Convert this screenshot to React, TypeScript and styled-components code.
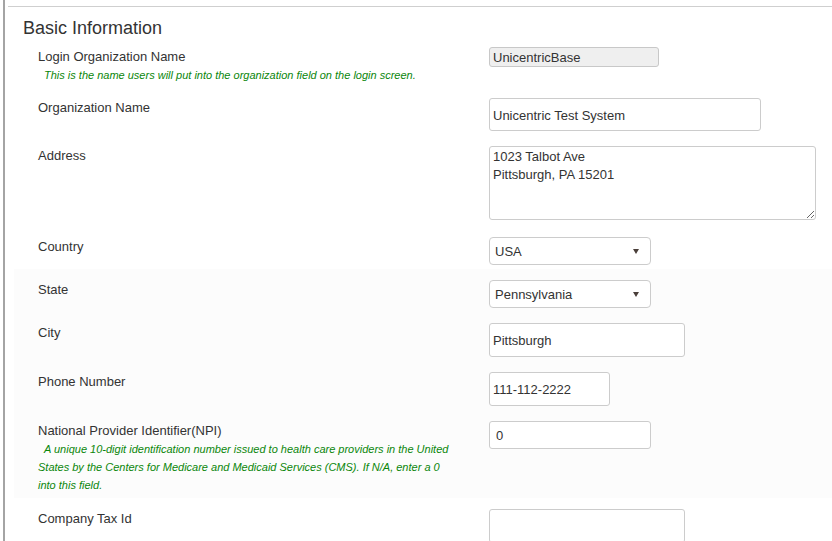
import React from 'react'
import styled, { createGlobalStyle } from 'styled-components'

const GlobalStyle = createGlobalStyle`
	body {
		margin: 0;
		background: #fff;
		color: #333;
		font-family: 'Liberation Sans', Arial, sans-serif;
	}
`

const Frame = styled.div`
	margin-left: 3px;
	padding: 6px 0 0 3px;
	border-left: 2px solid #a4a4a4;
	min-height: 541px;
	box-sizing: border-box;
	overflow: hidden;
`

const Panel = styled.section`
	border-top: 1px solid #cfcfcf;
`

const Heading = styled.h3`
	margin: 0 0 8px;
	padding: 10px 0 0 15px;
	font-size: 18px;
	font-weight: normal;
	line-height: 22px;
	color: #333;
`

const Row = styled.div<{ $after?: number }>`
	display: flex;
	align-items: flex-start;
	padding-left: 30px;
	margin-bottom: ${p => p.$after ?? 15}px;
`

const Group = styled.div`
	margin: 0 0 11px 6px;
	padding: 11px 0 4px;
	background: #fcfcfc;

	& > ${Row} {
		padding-left: 24px;
	}
`

const LabelCol = styled.div`
	flex: none;
	width: 451px;
	padding-top: 2px;
`

const Label = styled.div`
	font-size: 13px;
	line-height: 16px;
	color: #333;
`

const Help = styled.div`
	max-width: 420px;
	padding-top: 1px;
	font-size: 11px;
	font-style: italic;
	line-height: 18px;
	color: #0a860a;
	text-indent: 6px;
`

const fieldFont = `
	font-family: 'Liberation Sans', Arial, sans-serif;
	font-size: 13px;
	color: #333;
`

const TextInput = styled.input<{ $w: number; $h: number; $pad?: number }>`
	box-sizing: border-box;
	width: ${p => p.$w}px;
	height: ${p => p.$h}px;
	margin: 0;
	padding: 1px ${p => p.$pad ?? 3}px 0;
	border: 1px solid #ccc;
	border-radius: 3px;
	background: #fff;
	outline: none;
	${fieldFont}

	&:disabled {
		background: #efefef;
		color: #333;
		border-color: #c8c8c8;
	}
`

const TextArea = styled.textarea`
	box-sizing: border-box;
	width: 327px;
	height: 74px;
	margin: 0;
	padding: 1px 3px 0;
	border: 1px solid #ccc;
	border-radius: 3px;
	line-height: 18px;
	resize: vertical;
	outline: none;
	${fieldFont}
`

const SelectWrap = styled.div<{ $w: number }>`
	position: relative;
	width: ${p => p.$w}px;

	&::after {
		content: '';
		position: absolute;
		right: 12px;
		top: calc(50% - 2px);
		border-left: 3px solid transparent;
		border-right: 3px solid transparent;
		border-top: 5px solid #4a3f3a;
		pointer-events: none;
	}
`

const Select = styled.select`
	appearance: none;
	box-sizing: border-box;
	width: 100%;
	height: 28px;
	margin: 0;
	padding: 0 20px 0 5px;
	border: 1px solid #ccc;
	border-radius: 4px;
	background: #fff;
	outline: none;
	${fieldFont}
`

type Field = {
	label: string
	help?: string
	control: React.ReactNode
	after?: number
}

const FieldRow = ({ label, help, control, after }: Field) => (
	<Row $after={after}>
		<LabelCol>
			<Label>{label}</Label>
			{help && <Help>{help}</Help>}
		</LabelCol>
		{control}
	</Row>
)

export default function App() {
	return (
		<>
			<GlobalStyle />
			<Frame>
				<Panel>
					<Heading>Basic Information</Heading>
					<FieldRow
						label="Login Organization Name"
						help="This is the name users will put into the organization field on the login screen."
						control={<TextInput $w={170} $h={20} disabled defaultValue="UnicentricBase" />}
						after={14}
					/>
					<FieldRow
						label="Organization Name"
						control={<TextInput $w={272} $h={33} defaultValue="Unicentric Test System" />}
					/>
					<FieldRow
						label="Address"
						control={<TextArea defaultValue={'1023 Talbot Ave\nPittsburgh, PA 15201'} />}
						after={17}
					/>
					<FieldRow
						label="Country"
						after={4}
						control={
							<SelectWrap $w={162}>
								<Select defaultValue="USA">
									<option>USA</option>
									<option>Canada</option>
								</Select>
							</SelectWrap>
						}
					/>
					<Group>
						<FieldRow
							label="State"
							control={
								<SelectWrap $w={162}>
									<Select defaultValue="Pennsylvania">
										<option>Ohio</option>
										<option>Pennsylvania</option>
									</Select>
								</SelectWrap>
							}
						/>
						<FieldRow
							label="City"
							control={<TextInput $w={196} $h={34} defaultValue="Pittsburgh" />}
						/>
						<FieldRow
							label="Phone Number"
							control={<TextInput $w={121} $h={34} defaultValue="111-112-2222" />}
						/>
						<FieldRow
							label="National Provider Identifier(NPI)"
							help="A unique 10-digit identification number issued to health care providers in the United States by the Centers for Medicare and Medicaid Services (CMS). If N/A, enter a 0 into this field."
							control={<TextInput $w={162} $h={28} $pad={6} defaultValue="0" />}
							after={0}
						/>
					</Group>
					<FieldRow
						label="Company Tax Id"
						control={<TextInput $w={196} $h={34} defaultValue="" />}
					/>
				</Panel>
			</Frame>
		</>
	)
}
